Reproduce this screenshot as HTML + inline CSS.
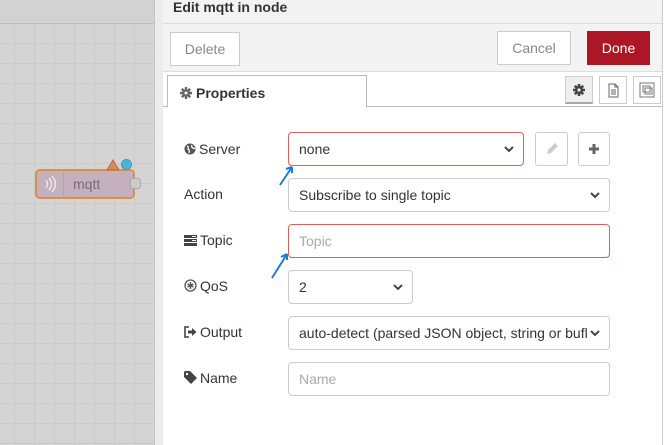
<!DOCTYPE html>
<html><head><style>
*{box-sizing:border-box;margin:0;padding:0}
body{width:665px;height:445px;overflow:hidden;position:relative;font-family:"Liberation Sans",Arial,sans-serif;font-size:14px;color:#333;background:#fff}
.canvas{position:absolute;left:0;top:0;width:156px;height:445px;background-color:#d4d4d4;
background-image:linear-gradient(#cacaca 1px,transparent 1px),linear-gradient(90deg,#cacaca 1px,transparent 1px);background-size:20px 20px;background-position:14px 23px}
.canvas .top{position:absolute;left:0;top:0;width:156px;height:24px;background:#d2d2d2;border-bottom:1px solid #bdbdbd}
.edge{position:absolute;left:154px;top:0;width:9px;height:445px;background:#ececec;border-left:1px solid #c4c4c4}
.panel{position:absolute;left:163px;top:0;width:500px;height:445px;background:#fff;border-right:1px solid #ccc}
.hdr{height:24px;background:#f3f3f3;font-weight:bold;padding:0 0 0 10px;line-height:15px;font-size:14px;border-bottom:1px solid #ddd}
.bar{position:absolute;top:24px;left:0;width:100%;height:48px;background:#f3f3f3;border-bottom:1px solid #ddd}
.btn{position:absolute;border:1px solid #ccc;background:#fff;color:#888;text-align:center;font-size:14px}
.tabs{position:absolute;top:72px;left:0;width:100%;height:35px;border-bottom:1px solid #bbb}
.tab{position:absolute;left:4px;top:3px;width:200px;height:33px;border:1px solid #bbb;border-bottom:1px solid #fff;background:#fff;font-weight:bold;padding:9px 0 0 12px}
.ib{position:absolute;top:4px;width:28px;height:28px;border:1px solid #ccc;background:#fff}
.lbl{position:absolute;left:21px;font-size:14px;color:#333}
.lbl svg{vertical-align:-1px;margin-right:3px}
.f{position:absolute;left:125px;height:34px;border:1px solid #ccc;border-radius:4px;padding:8px 10px;font-size:14px;background:#fff}
.err{border-color:#d6615f}
.ph{color:#aaa}
.chev{position:absolute;right:8px;top:11px}
</style></head><body>
<div class="canvas"><div class="top"></div>
<div style="position:absolute;left:35px;top:169px;width:100px;height:30px;border:2px solid #d9914a;border-radius:5px;background:#c5b1be"></div>
<div style="position:absolute;left:63px;top:171px;width:1px;height:26px;background:#b79faf"></div>
<svg style="position:absolute;left:42px;top:174px" width="16" height="20"><path d="M4 6q3 4 0 8M7 4q5 6 0 12M10 2q7 8 0 16" stroke="#eee" stroke-width="1.3" fill="none"/></svg>
<div style="position:absolute;left:73px;top:176px;color:#7a6a76;font-size:14px">mqtt</div>
<div style="position:absolute;left:130px;top:178px;width:11px;height:11px;background:#ccc;border:1px solid #aaa;border-radius:3px"></div>
<svg style="position:absolute;left:106px;top:159px" width="14" height="12"><path d="M7 1L13 11H1Z" fill="#d68a5c" stroke="#b86a40"/></svg>
<div style="position:absolute;left:121px;top:159px;width:11px;height:11px;border-radius:50%;background:#4eb2d6;border:1px solid #3a9cc0"></div>
</div>
<div class="edge"></div>
<div class="panel">
<div class="hdr">Edit mqtt in node</div>
<div class="bar">
<div class="btn" style="left:7px;top:8px;width:70px;height:34px;line-height:32px">Delete</div>
<div class="btn" style="left:334px;top:7px;width:74px;height:34px;line-height:32px">Cancel</div>
<div class="btn" style="left:424px;top:7px;width:63px;height:34px;line-height:32px;background:#ad1625;border-color:#ad1625;color:#fff">Done</div>
</div>
<div class="tabs">
<div class="tab"><svg width="12" height="12" style="vertical-align:-1px;margin-right:4px"><g stroke="#666" stroke-width="2.4"><path d="M6 0v12M0 6h12M1.8 1.8l8.4 8.4M10.2 1.8l-8.4 8.4"/></g><circle cx="6" cy="6" r="3.8" fill="#666"/><circle cx="6" cy="6" r="1.5" fill="#fff"/></svg>Properties</div>
<div class="ib" style="left:402px;background:#eee;border-bottom:2px solid #aaa"><svg width="26" height="26"><g stroke="#444" stroke-width="2.6"><path d="M13 7v12M7 13h12M8.8 8.8l8.4 8.4M17.2 8.8l-8.4 8.4"/></g><circle cx="13" cy="13" r="4" fill="#444"/><circle cx="13" cy="13" r="1.6" fill="#eee"/></svg></div>
<div class="ib" style="left:436px"><svg width="26" height="26"><path d="M9 7h6l3 3v10H9z M15 7v3h3 M11 13h5M11 15h5M11 17h5" stroke="#666" fill="none"/></svg></div>
<div class="ib" style="left:470px"><svg width="26" height="26"><rect x="6" y="6" width="14" height="14" stroke="#777" fill="none"/><rect x="9" y="9" width="7" height="6" stroke="#777" fill="none"/><rect x="11" y="11" width="7" height="6" stroke="#777" fill="none"/></svg></div>
</div>
<div class="lbl" style="top:141px"><svg width="12" height="12"><circle cx="6" cy="6" r="5.5" fill="#555"/><path d="M3 3q2 1 1 3q2 1 1 4M8 2q-1 2 1 3q1 1 2 0" stroke="#fff" stroke-width="1.3" fill="none"/></svg>Server</div>
<div class="f err" style="top:132px;width:236px">none<svg class="chev" width="12" height="10"><path d="M2 3l4 4 4-4" stroke="#444" stroke-width="2" fill="none"/></svg></div>
<div class="btn" style="left:372px;top:132px;width:33px;height:34px;border-radius:3px"><svg width="31" height="32"><path d="M11 21l1-4 7-7 3 3-7 7z" fill="#ccc"/></svg></div>
<div class="btn" style="left:415px;top:132px;width:32px;height:34px;border-radius:3px"><svg width="30" height="32"><path d="M15 11v10M10 16h10" stroke="#666" stroke-width="3"/></svg></div>
<div class="lbl" style="top:186px">Action</div>
<div class="f" style="top:178px;width:322px">Subscribe to single topic<svg class="chev" width="12" height="10"><path d="M2 3l4 4 4-4" stroke="#444" stroke-width="2" fill="none"/></svg></div>
<div class="lbl" style="top:232px"><svg width="13" height="11"><rect x="0" y="0" width="13" height="3" fill="#444"/><rect x="0" y="4" width="13" height="3" fill="#444"/><rect x="0" y="8" width="13" height="3" fill="#444"/><rect x="8" y="1" width="4" height="1" fill="#fff"/><rect x="8" y="5" width="4" height="1" fill="#fff"/></svg>Topic</div>
<div class="f err" style="top:224px;width:322px"><span class="ph">Topic</span></div>
<div class="lbl" style="top:278px"><svg width="13" height="13"><circle cx="6.5" cy="6.5" r="5.5" fill="none" stroke="#555" stroke-width="1.3"/><path d="M6.5 3v7M3.5 5l6 3M9.5 5l-6 3" stroke="#555" stroke-width="1.5"/></svg>QoS</div>
<div class="f" style="top:270px;width:125px">2<svg class="chev" width="12" height="10"><path d="M2 3l4 4 4-4" stroke="#444" stroke-width="2" fill="none"/></svg></div>
<div class="lbl" style="top:324px"><svg width="13" height="12"><path d="M5 1H1v10h4" stroke="#444" stroke-width="1.6" fill="none"/><path d="M4 4.5h4V2l4.5 4L8 10V7.5H4z" fill="#444"/></svg>Output</div>
<div class="f" style="top:316px;width:322px;white-space:nowrap;overflow:hidden;padding-right:38px">auto-detect (parsed JSON object, string or bufl<svg class="chev" style="background:#fff" width="12" height="10"><path d="M2 3l4 4 4-4" stroke="#444" stroke-width="2" fill="none"/></svg></div>
<div class="lbl" style="top:370px"><svg width="13" height="13"><path d="M0 1v5l7 7 6-6-7-7H1z" fill="#444"/><circle cx="3" cy="3" r="1.2" fill="#fff"/></svg>Name</div>
<div class="f" style="top:362px;width:322px"><span class="ph">Name</span></div>
</div>
<svg style="position:absolute;left:0;top:0" width="665" height="445"><path d="M280 185L292 167M292 167l-6 2M292 167l0 6" stroke="#1e7bd8" stroke-width="2" fill="none"/><path d="M272 278L287 254M287 254l-6 3M287 254l0 6" stroke="#1e7bd8" stroke-width="2" fill="none"/></svg>
</body></html>
